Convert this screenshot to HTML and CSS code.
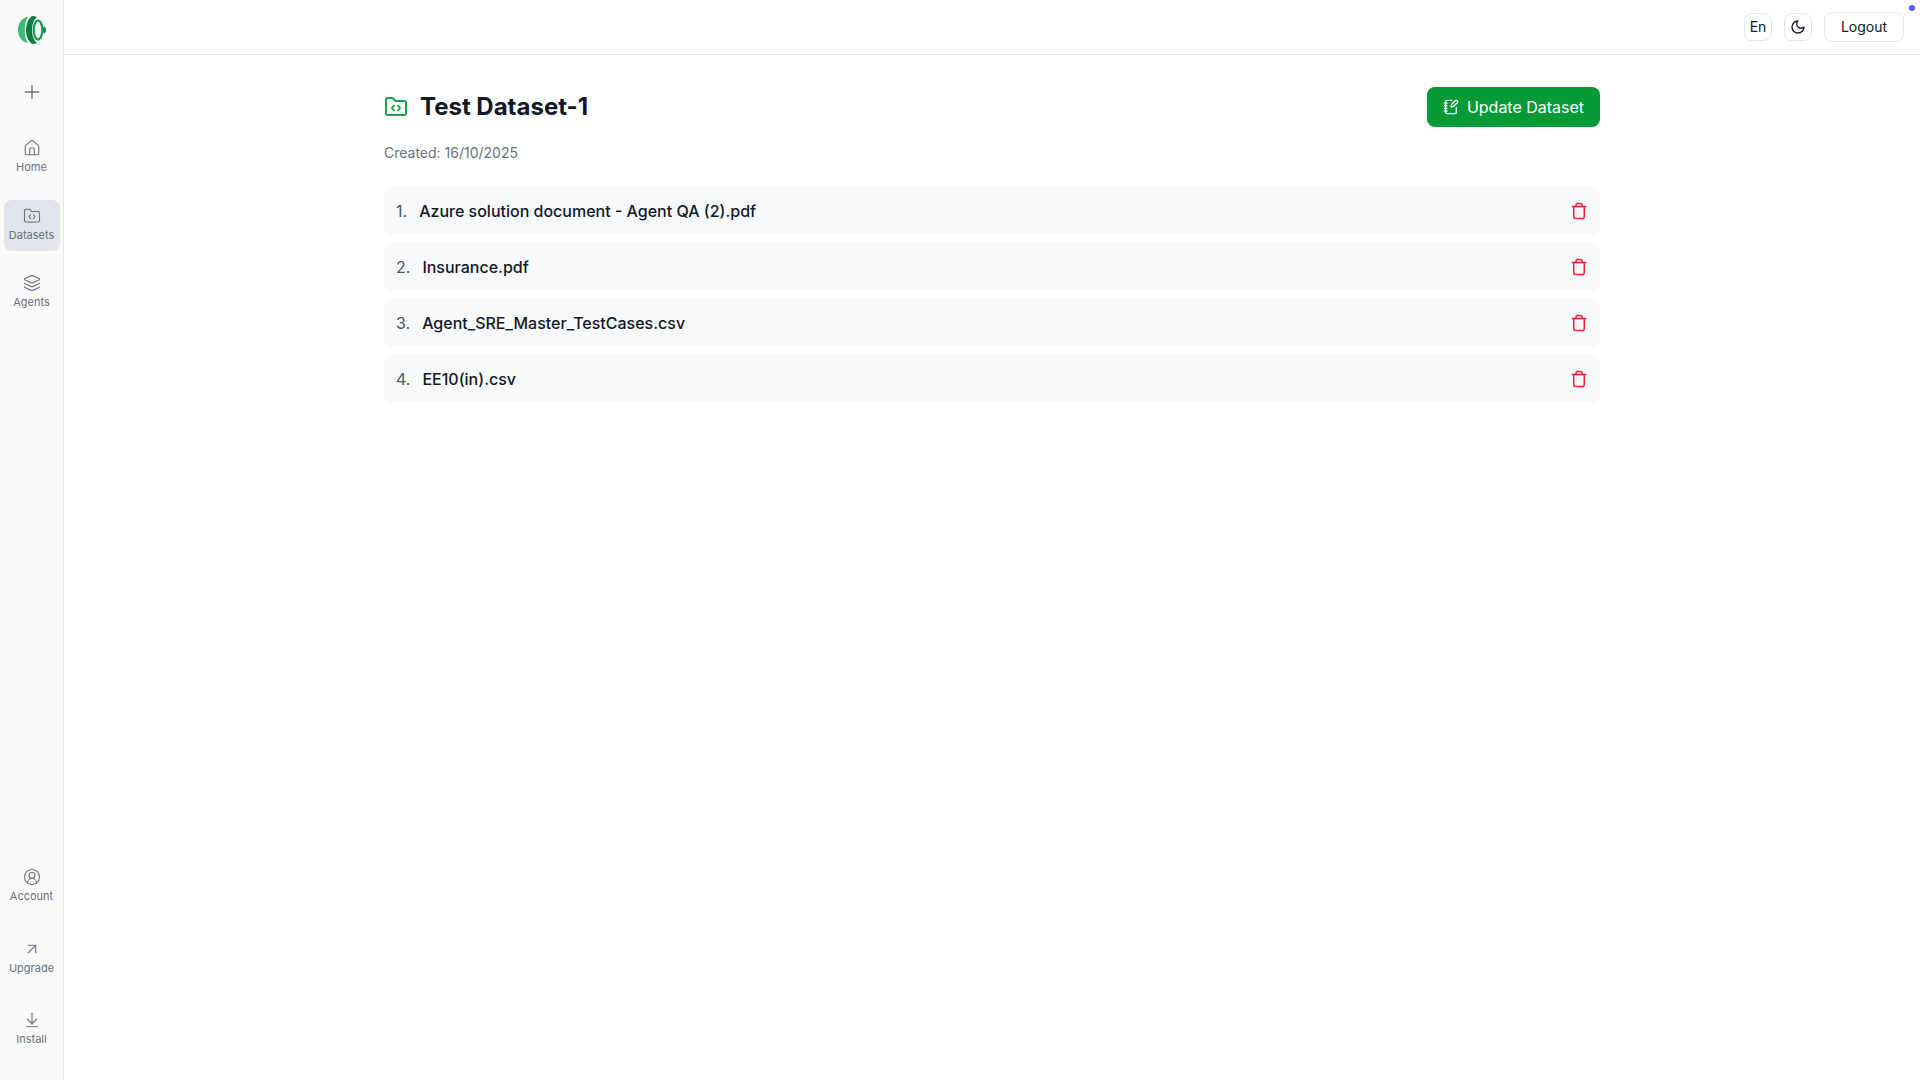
FILE: index.html
```html
<!DOCTYPE html>
<html lang="en">
<head>
<meta charset="utf-8">
<title>Test Dataset-1</title>
<link rel="stylesheet" href="styles.css">
</head>
<body>
<div class="app">
  <aside class="sidebar">
    <div class="logo">
      <svg width="28" height="28" viewBox="0 0 28 28" fill="none">
        <path d="M10 .8C3.800 2 0 7.200 0 14s3.800 12 10 13.200C7.800 24 6.800 19.500 6.800 14S7.800 4 10 .8Z" fill="#3dba78"/>
        <path d="M14 0C10 3 8 8 8 14s2 11 6 14c1.500 0 3.500-.2 5-1C16 24.500 14 19.500 14 14S16 3.300 19 1C17.500 .3 15.500 0 14 0Z" fill="#0b7d45"/>
        <ellipse cx="20" cy="14" rx="4.300" ry="9.500" stroke="#129a55" stroke-width="2.200"/>
        <path d="M25.800 10.300c1.400.6 2.200 2.100 2.200 3.700s-.8 3.100-2.200 3.700c-.5-1.100-.8-2.400-.8-3.700s.3-2.600.8-3.700Z" fill="#0b7d45"/>
      </svg>
    </div>
    <button class="plus" aria-label="New">
      <svg width="16" height="16" viewBox="0 0 16 16" fill="none" stroke="#6b7280" stroke-width="1.400" stroke-linecap="round"><path d="M8 1.500v13M1.500 8h13"/></svg>
    </button>
    <nav class="nav-top">
      <a class="nav-item">
        <svg class="nav-icon" viewBox="0 0 24 24"><path d="M15 21v-8a1 1 0 0 0-1-1h-4a1 1 0 0 0-1 1v8"/><path d="M3 10a2 2 0 0 1 .709-1.528l7-6a2 2 0 0 1 2.582 0l7 6A2 2 0 0 1 21 10v9a2 2 0 0 1-2 2H5a2 2 0 0 1-2-2z"/></svg>
        <span>Home</span>
      </a>
      <a class="nav-item active">
        <svg class="nav-icon" viewBox="0 0 24 24"><path d="M10 10.500 8 13l2 2.500"/><path d="m14 10.500 2 2.500-2 2.500"/><path d="M20 20a2 2 0 0 0 2-2V8a2 2 0 0 0-2-2h-7.900a2 2 0 0 1-1.690-.9L9.600 3.900A2 2 0 0 0 7.930 3H4a2 2 0 0 0-2 2v13a2 2 0 0 0 2 2z"/></svg>
        <span>Datasets</span>
      </a>
      <a class="nav-item">
        <svg class="nav-icon" viewBox="0 0 24 24"><path d="M12.830 2.180a2 2 0 0 0-1.660 0L2.600 6.080a1 1 0 0 0 0 1.830l8.580 3.910a2 2 0 0 0 1.660 0l8.580-3.900a1 1 0 0 0 0-1.830z"/><path d="M2 12a1 1 0 0 0 .58.91l8.600 3.910a2 2 0 0 0 1.650 0l8.580-3.900A1 1 0 0 0 22 12"/><path d="M2 17a1 1 0 0 0 .58.91l8.600 3.910a2 2 0 0 0 1.650 0l8.580-3.900A1 1 0 0 0 22 17"/></svg>
        <span>Agents</span>
      </a>
    </nav>
    <nav class="nav-bottom">
      <a class="nav-item">
        <svg class="nav-icon" viewBox="0 0 24 24"><path d="M18 20a6 6 0 0 0-12 0"/><circle cx="12" cy="10" r="4"/><circle cx="12" cy="12" r="10"/></svg>
        <span>Account</span>
      </a>
      <a class="nav-item">
        <svg class="nav-icon" viewBox="0 0 24 24"><path d="M7 7h10v10"/><path d="M7 17 17 7"/></svg>
        <span>Upgrade</span>
      </a>
      <a class="nav-item">
        <svg class="nav-icon" viewBox="0 0 24 24"><path d="M12 17V3"/><path d="m6 11 6 6 6-6"/><path d="M19 21H5"/></svg>
        <span>Install</span>
      </a>
    </nav>
  </aside>
  <div class="main">
    <header class="topbar">
      <button class="top-btn square">En</button>
      <button class="top-btn square" aria-label="Theme">
        <svg width="16" height="16" viewBox="0 0 24 24" fill="none" stroke="#111827" stroke-width="2" stroke-linecap="round" stroke-linejoin="round"><path d="M12 3a6 6 0 0 0 9 9 9 9 0 1 1-9-9Z"/></svg>
      </button>
      <button class="top-btn logout">Logout</button>
      <span class="dot"></span>
    </header>
    <main class="content">
      <div class="title-row">
        <div class="title">
          <svg width="24" height="24" viewBox="0 0 24 24" fill="none" stroke="#16a34a" stroke-width="2" stroke-linecap="round" stroke-linejoin="round"><path d="M10 10.500 8 13l2 2.500"/><path d="m14 10.500 2 2.500-2 2.500"/><path d="M20 20a2 2 0 0 0 2-2V8a2 2 0 0 0-2-2h-7.900a2 2 0 0 1-1.690-.9L9.600 3.900A2 2 0 0 0 7.930 3H4a2 2 0 0 0-2 2v13a2 2 0 0 0 2 2z"/></svg>
          <h1>Test Dataset-1</h1>
        </div>
        <button class="update">
          <svg width="16" height="16" viewBox="0 0 24 24" fill="none" stroke="#fff" stroke-width="2" stroke-linecap="round" stroke-linejoin="round"><path d="M13.400 2H6a2 2 0 0 0-2 2v16a2 2 0 0 0 2 2h12a2 2 0 0 0 2-2v-7.400"/><path d="M2 6h4"/><path d="M2 10h4"/><path d="M2 14h4"/><path d="M2 18h4"/><path d="M21.378 5.626a1 1 0 1 0-3.004-3.004l-5.010 5.012a2 2 0 0 0-.506.854l-.837 2.870a.5.5 0 0 0 .62.62l2.870-.837a2 2 0 0 0 .854-.506z"/></svg>
          Update Dataset
        </button>
      </div>
      <p class="created">Created: 16/10/2025</p>
      <ul class="files">
        <li class="file"><span class="num">1.</span><span class="name">Azure solution document - Agent QA (2).pdf</span><svg class="trash" viewBox="0 0 24 24"><path d="M3 6h18"/><path d="M19 6v14c0 1-1 2-2 2H7c-1 0-2-1-2-2V6"/><path d="M8 6V4c0-1 1-2 2-2h4c1 0 2 1 2 2v2"/></svg></li>
        <li class="file"><span class="num">2.</span><span class="name">Insurance.pdf</span><svg class="trash" viewBox="0 0 24 24"><path d="M3 6h18"/><path d="M19 6v14c0 1-1 2-2 2H7c-1 0-2-1-2-2V6"/><path d="M8 6V4c0-1 1-2 2-2h4c1 0 2 1 2 2v2"/></svg></li>
        <li class="file"><span class="num">3.</span><span class="name">Agent_SRE_Master_TestCases.csv</span><svg class="trash" viewBox="0 0 24 24"><path d="M3 6h18"/><path d="M19 6v14c0 1-1 2-2 2H7c-1 0-2-1-2-2V6"/><path d="M8 6V4c0-1 1-2 2-2h4c1 0 2 1 2 2v2"/></svg></li>
        <li class="file"><span class="num">4.</span><span class="name">EE10(in).csv</span><svg class="trash" viewBox="0 0 24 24"><path d="M3 6h18"/><path d="M19 6v14c0 1-1 2-2 2H7c-1 0-2-1-2-2V6"/><path d="M8 6V4c0-1 1-2 2-2h4c1 0 2 1 2 2v2"/></svg></li>
      </ul>
    </main>
  </div>
</div>
</body>
</html>
```
FILE: styles.css
```css
* { box-sizing: border-box; }
html, body { margin: 0; height: 100%; }
body { font-family: Inter, "Liberation Sans", sans-serif; color: #111827; background: #fff; overflow: hidden; }
button { font-family: inherit; cursor: pointer; }
.app { display: flex; height: 1080px; }

.sidebar { width: 64px; flex: none; display: flex; flex-direction: column; align-items: center; background: #fafaf9; border-right: 1px solid #e5e7eb; }
.logo { height: 28px; margin-top: 16px; display: flex; }
.plus { margin-top: 32px; width: 32px; height: 32px; padding: 0; border: 0; background: none; display: flex; align-items: center; justify-content: center; }
.nav-top { margin-top: 24px; display: flex; flex-direction: column; }
.nav-top .nav-item + .nav-item { margin-top: 17px; }
.nav-top .nav-item:last-child { margin-top: 16px; }
.nav-bottom { margin-top: auto; margin-bottom: 25px; display: flex; flex-direction: column; }
.nav-bottom .nav-item + .nav-item { margin-top: 21px; }
.nav-bottom .nav-item:last-child { margin-top: 20px; }
.nav-item { width: 56px; height: 51px; padding-bottom: 1px; border-radius: 8px; display: flex; flex-direction: column; align-items: center; justify-content: center; gap: 2px; font-size: 11px; line-height: 16px; color: #6b7280; }
.nav-item.active { background: #e1e4ea; }
.nav-icon { width: 18px; height: 18px; fill: none; stroke: #6b7280; stroke-width: 1.500; stroke-linecap: round; stroke-linejoin: round; }

.main { flex: 1; min-width: 0; display: flex; flex-direction: column; }
.topbar { position: relative; height: 55px; flex: none; display: flex; align-items: center; justify-content: flex-end; gap: 12px; padding: 0 16px 1px 0; border-bottom: 1px solid #e5e7eb; }
.top-btn { background: #fff; border: 1px solid #e5e7eb; border-radius: 8px; font-size: 14px; font-weight: 400; color: #111827; padding: 0; display: flex; align-items: center; justify-content: center; }
.square { width: 28px; height: 28px; }
.logout { width: 80px; height: 30px; }
.dot { position: absolute; top: 5px; right: 5px; width: 6px; height: 6px; border-radius: 50%; background: #5a5cf0; }

.content { width: 1216px; margin: 0 auto; padding-top: 32px; }
.title-row { display: flex; align-items: center; justify-content: space-between; height: 40px; }
.title { display: flex; align-items: center; gap: 12px; }
.title h1 { margin: 0; font-size: 24px; line-height: 32px; font-weight: 700; color: #111827; }
.update { height: 40px; width: 173px; border: 0; border-radius: 8px; background: #059a36; color: #fff; font-size: 16px; font-weight: 400; display: flex; align-items: center; justify-content: center; gap: 8px; padding: 0; }
.created { margin: 16px 0 0; font-size: 14px; line-height: 20px; color: #6b7280; }
.files { list-style: none; margin: 24px 0 0; padding: 0; display: flex; flex-direction: column; gap: 8px; }
.file { height: 48px; background: #f8f9fb; border-radius: 8px; display: flex; align-items: center; padding: 0 12px; font-size: 16px; }
.num { color: #4b5563; margin-right: 12px; }
.name { flex: 1; color: #111827; font-weight: 500; }
.trash { width: 18px; height: 18px; fill: none; stroke: #f5202f; stroke-width: 2; stroke-linecap: round; stroke-linejoin: round; }
```
